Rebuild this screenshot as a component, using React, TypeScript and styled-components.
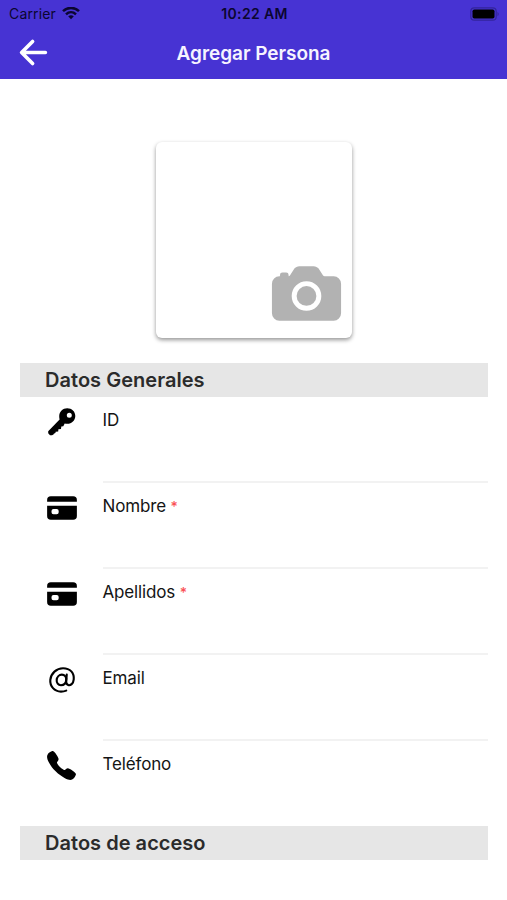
import type { ReactNode } from 'react';
import styled, { createGlobalStyle } from 'styled-components';
import { IoArrowBack, IoAt, IoCall, IoCamera, IoCard } from 'react-icons/io5';

const GlobalStyle = createGlobalStyle`
  *, *::before, *::after { box-sizing: border-box; }
  body {
    margin: 0;
    background: #fff;
    font-family: Inter, "Liberation Sans", sans-serif;
    overflow: hidden;
  }
`;

const Screen = styled.div`
  display: flex;
  flex-direction: column;
  height: 900px;
  background: #fff;
`;

const Header = styled.header`
  height: 79px;
  background: #4733d3;
`;

const StatusBar = styled.div`
  display: grid;
  grid-template-columns: 1fr auto 1fr;
  align-items: center;
  height: 27px;
  padding: 0 7px 0 9px;
  color: #0b0630;
  font-size: 14px;
  line-height: 20px;
`;

const Carrier = styled.div`
  display: flex;
  align-items: center;
  gap: 6px;
  letter-spacing: 0.15px;
`;

const Clock = styled.div`
  font-weight: 600;
  letter-spacing: 0.35px;
`;

const BatterySlot = styled.div`
  display: flex;
  justify-content: flex-end;
`;

const NavBar = styled.div`
  display: grid;
  grid-template-columns: 68px 1fr 68px;
  align-items: center;
  height: 52px;
`;

const BackButton = styled.button`
  display: flex;
  padding: 0 0 2px 14px;
  border: 0;
  background: none;
  color: #fff;
`;

const Title = styled.h1`
  margin: 0;
  padding-top: 2px;
  color: #f6f4ff;
  font-size: 19px;
  font-weight: 600;
  line-height: 24px;
  letter-spacing: -0.03px;
  text-align: center;
`;

const Photo = styled.button`
  display: flex;
  align-items: flex-end;
  justify-content: flex-end;
  width: 196px;
  height: 196px;
  margin: 63px auto 25px;
  padding: 0 6px 5.5px 0;
  border: 0;
  border-radius: 6px;
  background: #fff;
  color: #b2b2b2;
  box-shadow: 0 2px 4px rgba(0, 0, 0, 0.42);
`;

const Section = styled.section`
  margin: 0 19px 0 20px;
`;

const SectionTitle = styled.h2`
  height: 34px;
  margin: 0;
  padding-left: 25px;
  background: #e6e6e6;
  color: #2b2b2b;
  font-size: 20px;
  font-weight: 600;
  line-height: 34px;
  letter-spacing: 0.03px;
`;

const Field = styled.label`
  display: grid;
  grid-template-columns: 82px 1fr;
  height: 85.9px;
`;

const FieldIcon = styled.span`
  display: flex;
  justify-content: center;
  padding: 8px 0 0 1px;
  color: #000;
`;

const FieldBody = styled.span<{ $last: boolean }>`
  margin-left: 0.5px;
  padding-top: 11px;
  border-bottom: 2px solid ${({ $last }) => ($last ? 'transparent' : '#f2f2f2')};
  color: #141414;
  font-size: 17px;
  line-height: 24px;
  letter-spacing: -0.15px;
`;

const Required = styled.span`
  color: #fa5055;
  font-size: 14px;
  font-weight: 500;
`;

const WifiIcon = () => (
  <svg width="18" height="14" viewBox="0 0 18 14" fill="none" stroke="currentColor" strokeWidth="2.5">
    <path d="M1 4.200C5.500 -.2 12.500 -.2 17 4.200" />
    <path d="M4 7.300C6.900 4.600 11.100 4.600 14 7.300" />
    <path d="M9 12.200L6.200 9.300Q9 7.100 11.800 9.300Z" fill="currentColor" stroke="none" />
  </svg>
);

const BatteryIcon = () => (
  <svg width="30" height="14" viewBox="0 0 30 14">
    <rect x="0.800" y="0.800" width="25.400" height="12.400" rx="3.500" fill="none" stroke="#33259c" strokeWidth="1.200" />
    <rect x="2.500" y="2.500" width="22" height="9" rx="1.800" fill="#000" />
    <path d="M27.500 4.700Q30 7 27.500 9.300Z" fill="#33259c" />
  </svg>
);

const KeyIcon = () => (
  <svg width="34" height="34" viewBox="0 0 34 34" fill="currentColor">
    <path
      fillRule="evenodd"
      d="M22.200 3.200C26.800 3.200 30.300 6.600 30.300 10.900C30.300 15.300 26.700 18.800 22.300 18.800C21.300 18.800 20.500 18.700 19.700 18.500L18.300 21.300L16.300 21.500L16 24L13.400 24.300L13.200 26.500L10.700 26.800L10.400 28L8.800 28.800L8.500 29.600L7 30.300H5L3.200 28.300V26.200L14.600 14.400C14.300 13.400 14.200 12.300 14.200 11C14.200 6.600 17.800 3.200 22.200 3.200ZM24.300 7.800A2.500 2.500 0 1 0 24.300 12.800A2.500 2.500 0 1 0 24.300 7.800Z"
    />
  </svg>
);

interface FieldData {
  label: string;
  icon: ReactNode;
  required?: boolean;
}

const fields: FieldData[] = [
  { label: 'ID', icon: <KeyIcon /> },
  { label: 'Nombre', icon: <IoCard size={34} />, required: true },
  { label: 'Apellidos', icon: <IoCard size={34} />, required: true },
  { label: 'Email', icon: <IoAt size={34} /> },
  { label: 'Teléfono', icon: <IoCall size={33} /> },
];

export default function App() {
  return (
    <Screen>
      <GlobalStyle />
      <Header>
        <StatusBar>
          <Carrier>
            Carrier <WifiIcon />
          </Carrier>
          <Clock>10:22 AM</Clock>
          <BatterySlot>
            <BatteryIcon />
          </BatterySlot>
        </StatusBar>
        <NavBar>
          <BackButton aria-label="Volver">
            <IoArrowBack size={39} />
          </BackButton>
          <Title>Agregar Persona</Title>
        </NavBar>
      </Header>
      <Photo aria-label="Foto">
        <IoCamera size={79} />
      </Photo>
      <Section>
        <SectionTitle>Datos Generales</SectionTitle>
        {fields.map(({ label, icon, required }, i) => (
          <Field key={label}>
            <FieldIcon>{icon}</FieldIcon>
            <FieldBody $last={i === fields.length - 1}>
              {label} {required && <Required>*</Required>}
            </FieldBody>
          </Field>
        ))}
      </Section>
      <Section>
        <SectionTitle>Datos de acceso</SectionTitle>
      </Section>
    </Screen>
  );
}
